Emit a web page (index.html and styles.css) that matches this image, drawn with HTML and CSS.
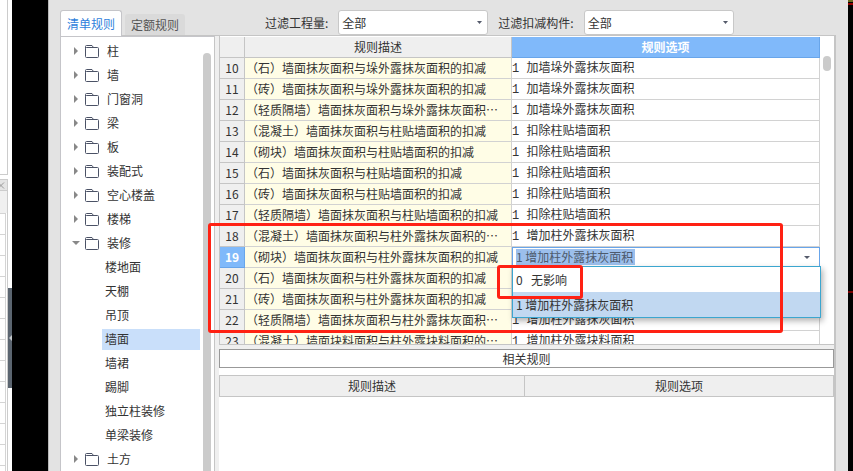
FILE: index.html
```
<!DOCTYPE html>
<html lang="zh-CN">

<head>
    <meta charset="UTF-8">
    <meta name="viewport" content="width=device-width, initial-scale=1.0">
    <title>计算规则</title>
    <link rel="stylesheet" href="styles.css">
</head>

<body>

    <svg class="defs" width="0" height="0">
        <symbol id="folder" viewBox="0 0 14 13">
            <path d="M.5 3.5V1.5Q.5.5 1.5.5H7L8.5 2.5M.5 3.5Q.5 2.5 1.5 2.5H12.5Q13.5 2.5 13.5 3.5V11.5Q13.5 12.5 12.5 12.5H1.5Q.5 12.5.5 11.5Z" fill="none" stroke="#4b5266" />
        </symbol>
    </svg>

    <aside class="dock">
        <div class="dock-top"></div>
        <div class="dock-title"><svg width="5" height="7" viewBox="0 0 5 7"><path d="M-2 0.5L4 6.5M4 0.5L-2 6.5" stroke="#999" fill="none" /></svg></div>
        <div class="dock-head"></div>
        <div class="dock-rows"></div>
        <button type="button" class="dock-handle" aria-label="折叠"></button>
    </aside>

    <div class="canvas"></div>

    <main class="dialog">
        <div class="topbar">
            <nav class="tabs">
                <button type="button" class="tab active">清单规则</button>
                <button type="button" class="tab">定额规则</button>
            </nav>
            <div class="filter">
                <label for="filterQty">过滤工程量:</label>
                <select id="filterQty"><option>全部</option></select>
            </div>
            <div class="filter">
                <label for="filterPart">过滤扣减构件:</label>
                <select id="filterPart"><option>全部</option></select>
            </div>
        </div>

        <div class="content">
            <div class="tree">
                <ul>
                    <li class="node"><i class="arrow"></i><svg class="folder"><use href="#folder" /></svg>柱</li>
                    <li class="node"><i class="arrow"></i><svg class="folder"><use href="#folder" /></svg>墙</li>
                    <li class="node"><i class="arrow"></i><svg class="folder"><use href="#folder" /></svg>门窗洞</li>
                    <li class="node"><i class="arrow"></i><svg class="folder"><use href="#folder" /></svg>梁</li>
                    <li class="node"><i class="arrow"></i><svg class="folder"><use href="#folder" /></svg>板</li>
                    <li class="node"><i class="arrow"></i><svg class="folder"><use href="#folder" /></svg>装配式</li>
                    <li class="node"><i class="arrow"></i><svg class="folder"><use href="#folder" /></svg>空心楼盖</li>
                    <li class="node"><i class="arrow"></i><svg class="folder"><use href="#folder" /></svg>楼梯</li>
                    <li class="node"><i class="arrow open"></i><svg class="folder"><use href="#folder" /></svg>装修</li>
                    <li class="leaf">楼地面</li>
                    <li class="leaf">天棚</li>
                    <li class="leaf">吊顶</li>
                    <li class="leaf selected">墙面</li>
                    <li class="leaf">墙裙</li>
                    <li class="leaf">踢脚</li>
                    <li class="leaf">独立柱装修</li>
                    <li class="leaf">单梁装修</li>
                    <li class="node"><i class="arrow"></i><svg class="folder"><use href="#folder" /></svg>土方</li>
                </ul>
                <div class="tree-scroll"></div>
            </div>

            <div class="panel">
                <div class="rules">
                    <table class="grid">
                        <colgroup>
                            <col class="col-no">
                            <col class="col-desc">
                            <col class="col-opt">
                        </colgroup>
                        <thead>
                            <tr><th></th><th>规则描述</th><th class="current">规则选项</th></tr>
                        </thead>
                        <tbody>
                            <tr><th>10</th><td class="desc">（石）墙面抹灰面积与垛外露抹灰面积的扣减</td><td>1 加墙垛外露抹灰面积</td></tr>
                            <tr><th>11</th><td class="desc">（砖）墙面抹灰面积与垛外露抹灰面积的扣减</td><td>1 加墙垛外露抹灰面积</td></tr>
                            <tr><th>12</th><td class="desc">（轻质隔墙）墙面抹灰面积与垛外露抹灰面积…</td><td>1 加墙垛外露抹灰面积</td></tr>
                            <tr><th>13</th><td class="desc">（混凝土）墙面抹灰面积与柱贴墙面积的扣减</td><td>1 扣除柱贴墙面积</td></tr>
                            <tr><th>14</th><td class="desc">（砌块）墙面抹灰面积与柱贴墙面积的扣减</td><td>1 扣除柱贴墙面积</td></tr>
                            <tr><th>15</th><td class="desc">（石）墙面抹灰面积与柱贴墙面积的扣减</td><td>1 扣除柱贴墙面积</td></tr>
                            <tr><th>16</th><td class="desc">（砖）墙面抹灰面积与柱贴墙面积的扣减</td><td>1 扣除柱贴墙面积</td></tr>
                            <tr><th>17</th><td class="desc">（轻质隔墙）墙面抹灰面积与柱贴墙面积的扣减</td><td>1 扣除柱贴墙面积</td></tr>
                            <tr><th>18</th><td class="desc">（混凝土）墙面抹灰面积与柱外露抹灰面积的…</td><td>1 增加柱外露抹灰面积</td></tr>
                            <tr>
                                <th class="current">19</th>
                                <td class="desc">（砌块）墙面抹灰面积与柱外露抹灰面积的扣减</td>
                                <td class="editing">
                                    <div class="combo">
                                        <input type="text" value="1 增加柱外露抹灰面积" aria-label="规则选项">
                                        <button type="button" class="combo-btn" aria-label="展开"></button>
                                    </div>
                                    <div class="popup">
                                        <button type="button"><span class="code">0</span>无影响</button>
                                        <button type="button" class="hover">1 增加柱外露抹灰面积</button>
                                    </div>
                                </td>
                            </tr>
                            <tr><th>20</th><td class="desc">（石）墙面抹灰面积与柱外露抹灰面积的扣减</td><td></td></tr>
                            <tr><th>21</th><td class="desc">（砖）墙面抹灰面积与柱外露抹灰面积的扣减</td><td></td></tr>
                            <tr><th>22</th><td class="desc">（轻质隔墙）墙面抹灰面积与柱外露抹灰面积…</td><td>1 增加柱外露抹灰面积</td></tr>
                            <tr><th>23</th><td class="desc">（混凝土）墙面块料面积与柱外露块料面积的…</td><td>1 增加柱外露块料面积</td></tr>
                        </tbody>
                    </table>
                    <div class="rules-scroll"></div>
                </div>

                <div class="related">
                    <h2>相关规则</h2>
                    <table class="related-grid">
                        <colgroup>
                            <col class="col-related">
                            <col>
                        </colgroup>
                        <thead>
                            <tr><th>规则描述</th><th>规则选项</th></tr>
                        </thead>
                    </table>
                </div>
            </div>
        </div>
    </main>

    <div class="canvas canvas-right"></div>

    <div class="mark mark-rows"></div>
    <div class="mark mark-option"></div>

</body>

</html>
```
FILE: styles.css
```
* {
    box-sizing: border-box;
}

body {
    margin: 0;
    height: 100vh;
    display: grid;
    grid-template-columns: 12px 36px minmax(0, 1fr) 5px;
    position: relative;
    overflow: hidden;
    font-family: "Noto Sans CJK SC", sans-serif;
    font-size: 12px;
    line-height: 20px;
    color: #333;
}

button,
input,
select {
    font: inherit;
    color: inherit;
    margin: 0;
    padding: 0;
    border: none;
    background: none;
}

ul {
    list-style: none;
    margin: 0;
    padding: 0;
}

.defs {
    position: absolute;
}

/* left dock */
.dock {
    position: relative;
    display: flex;
    flex-direction: column;
    background: #fff;
}

.dock > div {
    width: 8px;
    border-right: 1px solid #ccc;
}

.dock-top {
    height: 175px;
    border-bottom: 1px solid #ccc;
    margin-bottom: 4px;
}

.dock-title {
    height: 12px;
    display: flex;
    align-items: center;
    background: #e4e4e4;
    border-top: 1px solid #ccc;
    border-bottom: 1px solid #ccc;
}

.dock-head {
    height: 22px;
    background: #f0f0f0;
}

.dock-rows {
    flex: 1;
    background: linear-gradient(to right, transparent 5px, #d4d4d4 5px, #d4d4d4 6px, #fff 6px),
        repeating-linear-gradient(#d4d4d4 0 1px, #fff 1px 21px);
}

.dock-handle {
    position: absolute;
    left: 8px;
    top: 288px;
    width: 4px;
    height: 100px;
    background: #5b6570;
}

.dock-handle::before {
    content: "";
    display: block;
    margin-left: 1px;
    border: 3px solid transparent;
    border-left: 0;
    border-right-color: #c4c8cc;
}

.canvas {
    background: #000;
}

.canvas-right {
    background: linear-gradient(#6b6b20 0 2px, #000 2px 3px, #900 3px 5px, #000 5px 291px, #700 291px 293px, #000 293px);
}

/* dialog */
.dialog {
    display: flex;
    flex-direction: column;
    min-height: 0;
    padding: 0 12px 0 11px;
    background: #e3e3e3;
    border-left: 1px solid #b8b8b8;
}

.topbar {
    display: flex;
    align-items: flex-end;
    height: 36px;
    flex: none;
    border-bottom: 1px solid #c5c5c5;
}

.tabs {
    display: flex;
    align-items: flex-end;
    gap: 3px;
    margin-right: 80px;
}

.tab {
    width: 60px;
    height: 21px;
    border-radius: 3px 3px 0 0;
    background: #dadada;
    color: #555;
}

.tab.active {
    width: 62px;
    height: 26px;
    margin-bottom: -1px;
    border: 1px solid #c5c5c9;
    border-bottom: none;
    background: #fff;
    color: #2f7fdc;
}

.filter {
    display: flex;
    align-items: center;
    gap: 10px;
    margin-right: 10px;
}

select {
    appearance: none;
    width: 150px;
    height: 25px;
    padding-left: 3px;
    border: 1px solid #c8c8c8;
    border-radius: 3px;
    background: #fff url("data:image/svg+xml,%3Csvg xmlns='http://www.w3.org/2000/svg' width='5' height='3'%3E%3Cpath d='M0 0H5L2.5 3Z' fill='%23555b6b'/%3E%3C/svg%3E") no-repeat right 5px center;
}

.content {
    flex: 1;
    min-height: 0;
    display: flex;
    background: #efefef;
    border-left: 1px solid #c5c5c9;
    border-right: 2px solid #c5c5c5;
}

/* tree */
.tree {
    flex: none;
    width: 154px;
    margin-right: 4px;
    padding: 2px 3px 0 0;
    display: flex;
    overflow: hidden;
    background: #fff;
    border-top: 1px solid #c5c5c9;
    border-right: 1px solid #c5c5c5;
}

.tree ul {
    flex: 1;
    margin-right: 3px;
}

.node,
.leaf {
    display: flex;
    align-items: center;
    height: 24px;
}

.node {
    padding-left: 13px;
}

.arrow {
    width: 4px;
    margin-right: 7px;
    border: 4px solid transparent;
    border-left-color: #888;
    border-right: 0;
}

.arrow.open {
    width: 8px;
    margin: 0 5px 0 -2px;
    border: 4px solid transparent;
    border-top-color: #888;
    border-bottom: 0;
}

.folder {
    width: 14px;
    height: 13px;
    margin-right: 8px;
}

.leaf {
    margin-left: 41px;
    padding-left: 3px;
}

.leaf.selected {
    background: linear-gradient(#c9dffa, #c9dffa) no-repeat center / 100% 21px;
}

.tree-scroll {
    width: 8px;
    margin-top: 14px;
    border-radius: 4px 4px 0 0;
    background: #cbcbcb;
}

/* rule tables */
.panel {
    flex: 1;
    min-width: 0;
    display: flex;
    flex-direction: column;
}

.rules {
    flex: 1;
    min-height: 0;
    display: flex;
    overflow: hidden;
    padding-top: 1px;
    background: #fff;
    border-bottom: 1px solid #c5c5c5;
    border-left: 1px solid #c5c5c5;
}

table {
    table-layout: fixed;
    border-collapse: separate;
    border-spacing: 0;
}

.grid {
    flex: 1;
    min-width: 0;
    align-self: flex-start;
}

.col-no {
    width: 25px;
}

.col-desc {
    width: 267px;
}

.col-related {
    width: 305px;
}

th,
td {
    height: 21px;
    padding: 0 1px;
    line-height: 20px;
    font-weight: normal;
    white-space: nowrap;
    border-right: 1px solid #d2d2d2;
    border-bottom: 1px solid #d2d2d2;
}

th {
    text-align: center;
    background: #efefef;
    border-color: #c5c5c5;
}

td {
    padding: 2px 0 0;
    line-height: 18px;
    font-family: "Liberation Mono", "Noto Sans CJK SC", monospace;
}

.desc {
    padding: 0 1px;
    line-height: 20px;
    background: #fffde6;
    font-family: "Noto Sans CJK SC", sans-serif;
}

th.current {
    color: #fff;
    font-weight: bold;
    background: #80b9fa;
    border-color: #68a5ea;
}

.editing {
    position: relative;
    padding: 0;
    border-color: #68a5ea;
    box-shadow: inset 1px 1px #68a5ea;
    font-family: "Noto Sans CJK SC", sans-serif;
}

.combo {
    display: flex;
    align-items: center;
    justify-content: space-between;
    padding: 0 9px 0 4px;
}

.combo input {
    width: 119px;
    height: 16px;
    background: #9cbfec;
    color: #4d5a6c;
}

.combo-btn {
    border: 3px solid transparent;
    border-top-color: #555b6b;
    border-bottom: 0;
}

.popup {
    position: absolute;
    z-index: 1;
    top: 19px;
    left: 0;
    right: -2px;
    border: 1px solid #3ca6cf;
    background: #fff;
    box-shadow: 2px 3px 6px rgba(0, 0, 0, 0.3);
}

.popup button {
    display: block;
    width: 100%;
    height: 25px;
    padding-left: 3px;
    text-align: left;
}

.popup .hover {
    background: #c1d8f1;
}

.code {
    display: inline-block;
    width: 15px;
}

.rules-scroll {
    flex: none;
    width: 8px;
    height: 15px;
    margin: 19px 3px 0;
    border-radius: 4px;
    background: #cbcbcb;
}

.related {
    flex: 0 0 126px;
    padding-top: 4px;
    background: linear-gradient(#efefef 4px, #fff 4px);
}

.related h2 {
    margin: 0 0 7px;
    height: 19px;
    line-height: 17px;
    font-size: 12px;
    font-weight: normal;
    text-align: center;
    background: #fff;
    border: 1px solid #999;
}

.related-grid {
    width: 100%;
    border-top: 1px solid #c5c5c5;
    border-left: 1px solid #c5c5c5;
}

/* highlight frames over the dialog */
.mark {
    position: absolute;
    z-index: 2;
    border: 3px solid #ff2113;
    border-radius: 3px;
    pointer-events: none;
}

.mark-rows {
    left: 208px;
    top: 223px;
    width: 575px;
    height: 110px;
}

.mark-option {
    left: 497px;
    top: 265px;
    width: 86px;
    height: 34px;
}
```
